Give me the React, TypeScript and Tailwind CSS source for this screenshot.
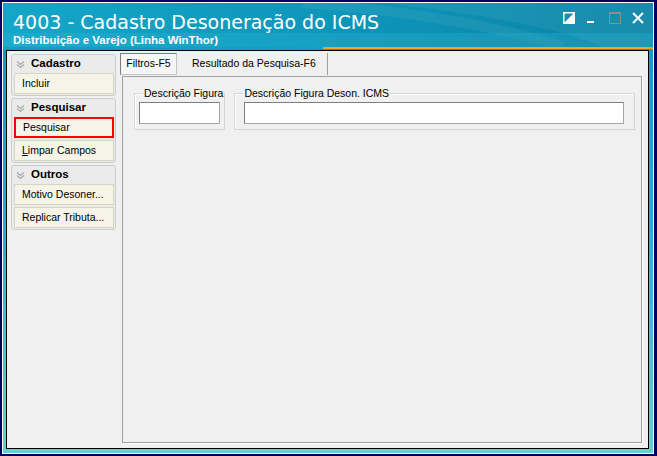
import { ReactNode } from "react";

type Group = {
  title: string;
  items: { label: ReactNode; highlight?: boolean }[];
};

const groups: Group[] = [
  { title: "Cadastro", items: [{ label: "Incluir" }] },
  {
    title: "Pesquisar",
    items: [
      { label: "Pesquisar", highlight: true },
      {
        label: (
          <>
            <span className="underline">L</span>impar Campos
          </>
        ),
      },
    ],
  },
  {
    title: "Outros",
    items: [{ label: "Motivo Desoner..." }, { label: "Replicar Tributa..." }],
  },
];

function Chevrons() {
  return (
    <svg width="9" height="9" viewBox="0 0 9 9" className="shrink-0">
      <path d="M1 1.5 L4.5 4.5 L8 1.5 M1 4.5 L4.5 7.5 L8 4.5" fill="none" stroke="#a9a9a9" strokeWidth="1.2" />
    </svg>
  );
}

function WindowButtons() {
  return (
    <div className="flex items-start pt-[9px] pr-[9px]">
      <svg width="12" height="12" viewBox="0 0 12 12">
        <rect x="0.75" y="0.75" width="10.5" height="10.5" fill="none" stroke="#fff" strokeWidth="1.5" />
        <path d="M11 1 L11 11 L1 11 Z" fill="#fff" />
      </svg>
      <svg width="12" height="12" viewBox="0 0 12 12" className="ml-[10px]">
        <rect x="2" y="9" width="7" height="2" fill="#fff" />
      </svg>
      <svg width="12" height="12" viewBox="0 0 12 12" className="ml-[12px]">
        <rect x="0.5" y="0.5" width="11" height="11" fill="none" stroke="#8e8e8e" strokeWidth="1" />
        <rect x="0" y="0" width="12" height="2" fill="#8e8e8e" />
      </svg>
      <svg width="12" height="12" viewBox="0 0 12 12" className="ml-[11px]">
        <path d="M1 1 L11 11 M11 1 L1 11" stroke="#fff" strokeWidth="2" />
      </svg>
    </div>
  );
}

function Sidebar() {
  return (
    <div className="w-[105px] mt-[1px] flex flex-col gap-[2px]">
      {groups.map((g) => (
        <div key={g.title} className="rounded-[3px] border border-[#cdcdcd] bg-[#ebebeb] pb-[1px]">
          <div className="h-[18px] flex items-center gap-[6px] pl-[4px]">
            <Chevrons />
            <span className="text-[11.5px] font-bold text-black leading-none">{g.title}</span>
          </div>
          <div className="flex flex-col gap-[2px]">
            {g.items.map((it, i) => (
              <div
                key={i}
                className={`ml-[2px] w-[100px] h-[21px] flex items-center pl-[7px] bg-[#f6f4e7] text-[10.5px] text-black whitespace-nowrap ${
                  it.highlight ? "border-2 border-[#ff0000] pl-[6px]" : "border border-[#d8d5c1]"
                }`}
              >
                {it.label}
              </div>
            ))}
          </div>
        </div>
      ))}
    </div>
  );
}

function Field({ label, width, inputWidth, pl }: { label: string; width: string; inputWidth: string; pl: string }) {
  return (
    <fieldset className={`${width} border border-[#d5d5d5] shadow-[inset_1px_1px_0_#ffffff]`}>
      <legend className="ml-[8px] px-[1px] text-[10.5px] leading-[13px] text-black bg-[#f0f0f0] whitespace-nowrap">{label}</legend>
      <div className={`${pl} pt-[2px] pb-[5px]`}>
        <div className={`${inputWidth} h-[22px] bg-white border border-[#7f7f7f] border-b-[#a5a5a5] border-r-[#a5a5a5]`} />
      </div>
    </fieldset>
  );
}

export default function App() {
  return (
    <div className="w-[657px] h-[456px] bg-[#00005e] pt-[2px] pl-[2px] pb-[2px] pr-[3px] font-['Liberation_Sans',Arial,sans-serif]">
      <div className="h-full flex flex-col border border-white bg-gradient-to-b from-[#0f98bb] via-[#23b0cc] to-[#5fd0de]">
        {/* title bar */}
        <div className="relative h-[44px] flex justify-between overflow-hidden bg-gradient-to-r from-[#14a6c8] via-[#0e96b9] to-[#0a84a7]">
          <svg className="absolute inset-0" width="652" height="44" viewBox="0 0 652 44" preserveAspectRatio="none">
            <path d="M380 0 C470 10 560 25 600 44 L652 44 L652 0 Z" fill="#ffffff" opacity="0.06" />
            <path d="M300 0 C420 8 520 30 560 44" fill="none" stroke="#ffffff" strokeWidth="10" opacity="0.06" />
            <path d="M0 30 L652 30 L652 44 L0 44 Z" fill="#30c0dc" opacity="0.25" />
          </svg>
          <div className="relative pl-[10px] pt-[8px] text-white">
            <div className="font-['DejaVu_Sans',Verdana,sans-serif] text-[19px] leading-[22px] whitespace-nowrap">
              4003 - Cadastro Desoneração do ICMS
            </div>
            <div className="mt-[1px] text-[11.5px] leading-[13px] font-bold whitespace-nowrap">
              Distribuição e Varejo (Linha WinThor)
            </div>
          </div>
          <div className="relative">
            <WindowButtons />
          </div>
        </div>
        <div className="h-[2px] bg-[#0f9fc0]">
          <div className="ml-[320px] h-full bg-[#f0a22e]" />
        </div>
        {/* body */}
        <div className="flex-1 pl-[3px] pr-[4px] pt-[1px] pb-[4px]">
          <div className="h-full border border-black bg-[#f0f0f0] flex pl-[4px] pt-[2px] pb-[5px] pr-[5px] gap-[4px] text-black">
            <Sidebar />
            <div className="flex-1 flex flex-col">
              <div className="h-[22px] flex text-[10.5px]">
                <div className="w-[57px] h-[22px] flex items-center justify-center bg-[#f7f7f7] border border-[#c4c4c4] border-t-[#7c7c7c] border-l-[#7c7c7c]">
                  Filtros-F5
                </div>
                <div className="w-[151px] h-[22px] flex items-center pl-[15px] border-r border-[#a0a0a0]">
                  Resultado da Pesquisa-F6
                </div>
              </div>
              <div className="flex-1 mt-[1px] ml-[2px] mr-[1px] border border-[#a0a0a0] shadow-[1px_1px_0_#ffffff] flex items-start gap-[9px] pl-[11px] pt-[10px]">
                <Field label="Descrição Figura" width="w-[91px]" inputWidth="w-[81px]" pl="pl-[4px]" />
                <Field label="Descrição Figura Deson. ICMS" width="w-[401px]" inputWidth="w-[380px]" pl="pl-[9px]" />
              </div>
            </div>
          </div>
        </div>
      </div>
    </div>
  );
}
